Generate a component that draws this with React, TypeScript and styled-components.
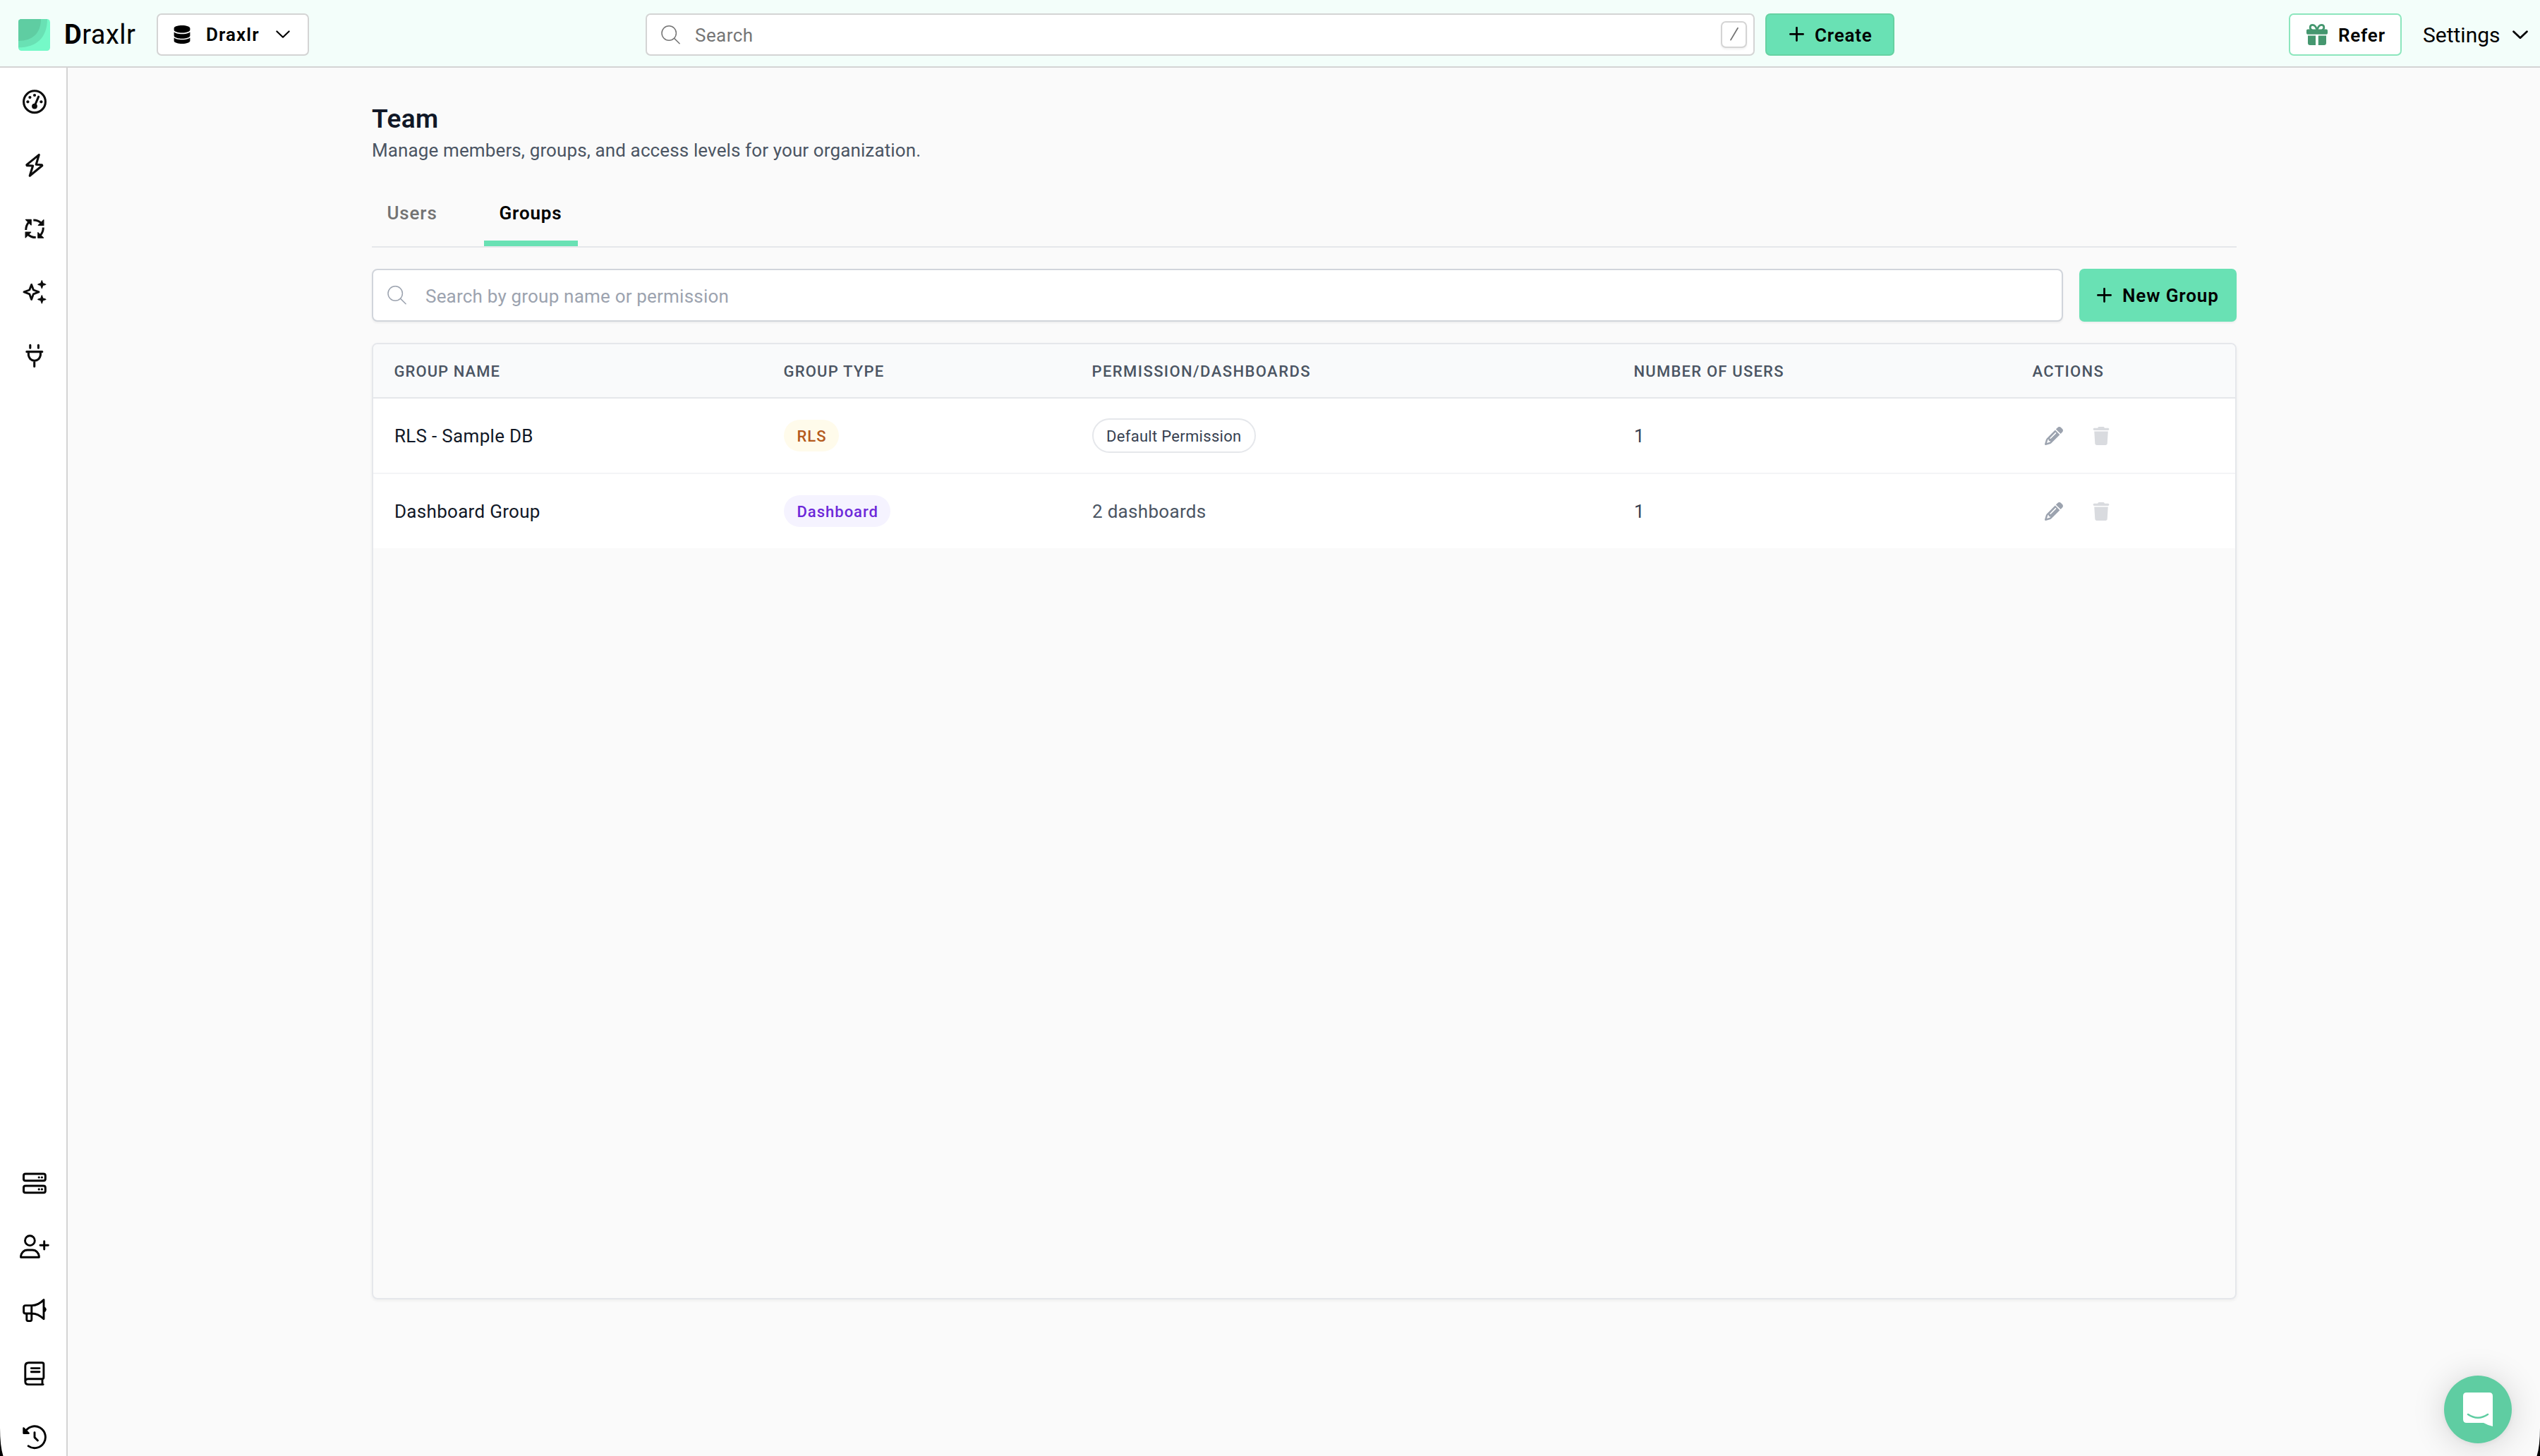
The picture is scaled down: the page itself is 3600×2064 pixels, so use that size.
import React from 'react';
import styled, { createGlobalStyle, css } from 'styled-components';
import { FaDatabase, FaPencil, FaTrash } from 'react-icons/fa6';

const GlobalStyle = createGlobalStyle`
  * { box-sizing: border-box; }
  html, body { margin: 0; padding: 0; }
  body {
    background: #fafafa;
    color: #000;
    font-family: Roboto, 'Liberation Sans', sans-serif;
    font-size: 26px;
    overflow: hidden;
  }
  button, input { font: inherit; color: inherit; margin: 0; }
  svg { display: block; flex: none; }
`;

/* ---------- shell ---------- */

const Shell = styled.div`
  display: grid;
  grid-template: 96px minmax(0, 1fr) / 96px minmax(0, 1fr);
  width: 100vw;
  height: 100vh;
  overflow: hidden;
`;

const Header = styled.header`
  grid-column: 1 / -1;
  display: grid;
  grid-template-columns: 1fr 1770px 1fr;
  align-items: center;
  padding-top: 4px;
  background: #f3fefa;
  border-bottom: 2px solid #d4d4d4;
`;

const HeaderStart = styled.div`
  display: flex;
  align-items: center;
  padding-left: 26px;
`;

const HeaderCenter = styled.div`
  display: flex;
  gap: 15px;
`;

const HeaderEnd = styled.div`
  display: flex;
  justify-content: flex-end;
  align-items: center;
  padding-right: 17px;
`;

const Brand = styled.div`
  width: 151px;
  padding-left: 20px;
  font-size: 38px;
  letter-spacing: 0.5px;
  white-space: nowrap;
  b { font-weight: 700; }
`;

const boxed = css`
  display: flex;
  align-items: center;
  height: 60px;
  border: 2px solid #d4d4d4;
  border-radius: 7px;
  background: #fff;
`;

const DatabaseSelect = styled.button`
  ${boxed}
  width: 216px;
  padding: 0 0 0 21px;
  font-weight: 600;
  letter-spacing: 1.1px;
`;

const SelectLabel = styled.span`
  width: 99px;
  margin-left: 21px;
  text-align: left;
`;

const GlobalSearch = styled.div`
  ${boxed}
  flex: 1;
  padding: 0 9px 0 20px;
  color: #757575;
  letter-spacing: 0.45px;
`;

const GlobalSearchLabel = styled.span`
  flex: 1;
  padding: 2px 0 0 21px;
`;

const Kbd = styled.span`
  display: flex;
  align-items: center;
  justify-content: center;
  width: 37px;
  height: 38px;
  border: 2px solid #d4d4d4;
  border-radius: 7px;
  background: #fff;
  box-shadow: 0 2px 3px rgba(0, 0, 0, 0.06);
`;

const CreateButton = styled.button`
  ${boxed}
  width: 183px;
  padding: 0 0 0 32px;
  gap: 15px;
  background: #69e1b4;
  border-color: #66d2a2;
  font-weight: 600;
  letter-spacing: 0.8px;
  span { padding-top: 2px; }
`;

const ReferButton = styled.button`
  ${boxed}
  width: 160px;
  padding: 0 0 0 23px;
  gap: 15px;
  border-color: #8ce6bd;
  font-weight: 600;
  letter-spacing: 0.8px;
  span { padding-top: 2px; }
`;

const SettingsMenu = styled.div`
  display: flex;
  align-items: center;
  width: 149px;
  margin-left: 30px;
  justify-content: space-between;
  font-size: 30px;
  span { padding-top: 1px; }
`;

const Sidebar = styled.nav`
  display: flex;
  flex-direction: column;
  justify-content: space-between;
  min-height: 0;
  padding-top: 3px;
  background: #fff;
  border-right: 2px solid #d4d4d4;
`;

const NavGroup = styled.div<{ $bottom?: boolean }>`
  display: flex;
  flex-direction: column;
  color: ${p => (p.$bottom ? '#000' : '#0d0d0d')};
  margin-bottom: ${p => (p.$bottom ? '-18px' : '0')};
`;

const NavItem = styled.a`
  display: flex;
  align-items: center;
  height: 90px;
  padding-left: 25px;
`;

/* ---------- page ---------- */

const Page = styled.main`
  display: flex;
  flex-direction: column;
  width: 2643px;
  height: 1746px;
  margin-left: 431px;
  padding-top: 48px;
`;

const Title = styled.h1`
  margin: 0;
  font-size: 37px;
  font-weight: 600;
  line-height: 49px;
  letter-spacing: 0.4px;
  color: #111827;
`;

const Subtitle = styled.p`
  margin: 2px 0 32px;
  line-height: 36px;
  letter-spacing: 0.12px;
  color: #4b5563;
`;

const Tabs = styled.div`
  display: flex;
  gap: 46px;
  border-bottom: 2px solid #e5e7eb;
`;

const Tab = styled.a<{ $active?: boolean }>`
  display: flex;
  align-items: center;
  width: ${p => (p.$active ? 133 : 113)}px;
  height: 86px;
  padding-left: 21.5px;
  border-bottom: 8px solid ${p => (p.$active ? '#69e1b4' : 'transparent')};
  color: ${p => (p.$active ? '#000' : '#737373')};
  font-weight: ${p => (p.$active ? 600 : 500)};
  letter-spacing: 0.85px;
`;

const Toolbar = styled.div`
  display: flex;
  gap: 23px;
  height: 75px;
  margin: 30px 0;
`;

const SearchField = styled.label`
  display: flex;
  flex: 1;
  align-items: center;
  padding-left: 20px;
  border: 2px solid #d1d5db;
  border-radius: 8px;
  background: #fff;
  color: #9ca3af;
  box-shadow: 0 2px 3px rgba(0, 0, 0, 0.05);
`;

const SearchInput = styled.input`
  flex: 1;
  height: 100%;
  margin-left: 27px;
  padding: 3px 0 0 0;
  border: 0;
  outline: 0;
  background: transparent;
  letter-spacing: 0.2px;
  &::placeholder { color: #9ca3af; opacity: 1; }
`;

const NewGroupButton = styled.button`
  display: flex;
  align-items: center;
  gap: 15px;
  width: 223px;
  padding: 0 0 0 25px;
  border: 0;
  border-radius: 7px;
  background: #69e1b4;
  font-weight: 600;
  letter-spacing: 0.9px;
  white-space: nowrap;
  box-shadow: 0 2px 3px rgba(0, 0, 0, 0.05);
  span { padding-top: 1px; }
`;

const Table = styled.div`
  flex: 1;
  border: 2px solid #e5e7eb;
  border-radius: 8px;
  box-shadow: 0 2px 4px rgba(0, 0, 0, 0.05);
  overflow: hidden;
`;

const columns = css`
  display: grid;
  grid-template-columns: 552px 437px 768px 565px 1fr;
  align-items: center;
`;

const HeadRow = styled.div`
  ${columns}
  height: 77px;
  background: #f9fafb;
  border-bottom: 2px solid #e5e7eb;
  color: #4b5563;
  font-size: 22px;
  font-weight: 500;
`;

const HeadCell = styled.div<{ $spacing: number }>`
  padding: 2px 0 0 29.5px;
  letter-spacing: ${p => p.$spacing}px;
  white-space: nowrap;
`;

const Row = styled.div`
  ${columns}
  height: 107px;
  background: #fff;
  border-bottom: 2px solid #f3f4f6;
  &:last-child {
    height: 105px;
    border-bottom: 0;
  }
`;

const Cell = styled.div<{ $tone: string }>`
  display: flex;
  align-items: center;
  gap: 7px;
  padding-left: 30px;
  color: ${p => p.$tone};
  letter-spacing: 0.3px;
`;

const Badge = styled.span<{ $bg: string; $fg: string }>`
  height: 45px;
  padding: 1px 17.5px 0 18.5px;
  border-radius: 23px;
  background: ${p => p.$bg};
  color: ${p => p.$fg};
  font-size: 22px;
  font-weight: 500;
  line-height: 45px;
  letter-spacing: 1px;
`;

const Pill = styled.span`
  height: 49px;
  padding: 1px 18px 0;
  border: 2px solid #e5e7eb;
  border-radius: 25px;
  color: #374151;
  font-size: 22px;
  line-height: 45px;
  letter-spacing: 0.3px;
`;

const IconButton = styled.button<{ $muted?: boolean }>`
  display: flex;
  align-items: center;
  justify-content: center;
  width: 60px;
  height: 60px;
  padding: 0;
  border: 0;
  background: none;
  color: ${p => (p.$muted ? '#d9dbdf' : '#9ca3af')};
`;

const ChatLauncher = styled.button`
  position: fixed;
  right: 40px;
  bottom: 18px;
  display: flex;
  align-items: center;
  justify-content: center;
  width: 96px;
  height: 96px;
  padding: 0;
  border: 0;
  border-radius: 50%;
  background: #5fcda2;
  box-shadow: 0 1.5px 9px rgba(0, 0, 0, 0.06), 0 3px 48px rgba(0, 0, 0, 0.16);
`;

const Corner = styled.svg<{ $side: 'left' | 'right' }>`
  position: fixed;
  bottom: 0;
  ${p => p.$side}: 0;
  transform: ${p => (p.$side === 'right' ? 'scaleX(-1)' : 'none')};
`;

/* ---------- icons ---------- */

const NavSvg = ({ children, w = 3 }: { children: React.ReactNode; w?: number }) => (
  <svg width="48" height="48" viewBox="0 0 48 48" fill="none" stroke="currentColor" strokeWidth={w} strokeLinecap="round" strokeLinejoin="round">
    {children}
  </svg>
);

const GaugeIcon = () => (
  <NavSvg w={3.1}>
    <circle cx="24" cy="24.2" r="15.4" />
    <path d="M29.6 17.2 25 28" />
    <g fill="currentColor" stroke="none">
      <circle cx="24" cy="30.6" r="3.9" />
      <circle cx="14.4" cy="24.3" r="2.1" />
      <circle cx="17.4" cy="18" r="2.1" />
      <circle cx="24" cy="15" r="2.1" />
      <circle cx="33.4" cy="24.3" r="2.1" />
    </g>
  </NavSvg>
);

const BoltIcon = () => (
  <NavSvg w={3.1}>
    <path d="M30.3 9.4 12.8 23.6 13.2 24.6 21.6 25 17.2 39.3 34.8 24.8 34.4 23.8 26.2 23.2Z" />
  </NavSvg>
);

const CycleIcon = () => (
  <NavSvg>
    {[0, 90, 180, 270].map(angle => (
      <g key={angle} transform={`rotate(${angle} 24 24.3)`}>
        <path d="M11.7 26C11.7 21 13.4 17.4 16.2 14.6" strokeLinecap="butt" />
        <path d="M11.4 11.4H19.2V19Z" fill="currentColor" strokeWidth="1.2" />
      </g>
    ))}
  </NavSvg>
);

const SparklesIcon = () => (
  <NavSvg w={2.9}>
    <path d="M19.6 13.4 22.4 21 30 23.9 22.4 26.8 19.6 34.4 16.8 26.8 9 23.9 16.8 21Z" />
    <g fill="currentColor" stroke="none">
      <path d="M34.3 6.9Q34.9 6.9 36.2 11.3 40.6 12.6 40.6 13.2 40.6 13.8 36.2 15.1 34.9 19.5 34.3 19.5 33.7 19.5 32.4 15.1 28 13.8 28 13.2 28 12.6 32.4 11.3 33.7 6.9 34.3 6.9Z" />
      <path d="M34.3 28.1Q34.9 28.1 36.2 32.5 40.6 33.8 40.6 34.4 40.6 35 36.2 36.3 34.9 40.7 34.3 40.7 33.7 40.7 32.4 36.3 28 35 28 34.4 28 33.8 32.4 32.5 33.7 28.1 34.3 28.1Z" />
    </g>
  </NavSvg>
);

const PlugIcon = () => (
  <NavSvg w={3.1}>
    <path d="M17.8 9.2V13.2M29.4 9.2V13.2M12.8 18.6H34.8M15.4 19V23.6A8.6 9 0 0 0 32.4 23.6V19M23.7 33V39.4" />
  </NavSvg>
);

const ServerIcon = () => (
  <NavSvg w={3}>
    <rect x="8.5" y="11" width="30.8" height="9.8" rx="2.6" />
    <rect x="8.5" y="28" width="30.8" height="9.8" rx="2.6" />
    <g fill="currentColor" stroke="none">
      <circle cx="30.2" cy="16" r="1.6" />
      <circle cx="34.4" cy="16" r="1.6" />
      <circle cx="30.2" cy="32.9" r="1.6" />
      <circle cx="34.4" cy="32.9" r="1.6" />
    </g>
  </NavSvg>
);

const UserPlusIcon = () => (
  <NavSvg w={2.9}>
    <circle cx="17.4" cy="15.7" r="6.9" />
    <path d="M4.5 39.3C4.5 33.3 8.4 29 14 29H20.8C26.4 29 30.4 33.3 30.4 39.3ZM37.7 16.6V28M32 22.3H43.3" />
  </NavSvg>
);

const MegaphoneIcon = () => (
  <NavSvg w={2.9}>
    <path d="M19.8 17.6H11.2Q8.6 17.6 8.6 20.2V26.4Q8.6 29 11.2 29H19.8ZM12.8 29V37.6Q12.8 39.6 14.8 39.6H17.8Q19.8 39.6 19.8 37.6V29M19.8 17.6C27 17.8 31.6 15 37 9.6V36.8C31.6 31.6 27 28.8 19.8 29" />
    <path d="M38 19.6Q40.8 20.6 40.8 23.3 40.8 26 38 27Z" fill="currentColor" stroke="none" />
  </NavSvg>
);

const BookIcon = () => (
  <NavSvg w={2.9}>
    <path d="M36.2 39.6H15.4Q10.8 39.6 10.8 35.4V13.8Q10.8 8.8 15.8 8.8H34.6Q36.9 8.8 36.9 11V29.6Q36.9 31.8 34.6 31.8H15.2Q10.8 31.8 10.8 35.6M35 32V39.4M19.3 16.6H31M19.3 21.7H31" />
  </NavSvg>
);

const HistoryIcon = () => (
  <NavSvg w={2.9}>
    <path d="M15.2 36.9A15.4 15.4 0 1 0 10.2 17.4M24 17.6V24.6L28.4 29" />
    <path d="M8.4 11.4V18.8H15.8Z" fill="currentColor" strokeWidth="2.2" />
  </NavSvg>
);

const SearchIcon = () => (
  <svg width="27" height="27" viewBox="0 0 27 27" fill="none" stroke="currentColor" strokeWidth="1.5" strokeLinecap="round">
    <circle cx="11.2" cy="11" r="10.2" />
    <path d="M18.6 18.4 26.1 25.7" />
  </svg>
);

const PlusIcon = () => (
  <svg width="21" height="22" viewBox="0 0 21 22" fill="none" stroke="currentColor" strokeWidth="2.7" strokeLinecap="round">
    <path d="M10.5 1.2V19.6M1.4 10.4H19.6" />
  </svg>
);

const ChevronIcon = ({ size, w }: { size: number; w: number }) => (
  <svg width={size} height={size * 0.56} viewBox="0 0 20 11" fill="none" stroke="currentColor" strokeWidth={w} strokeLinecap="round" strokeLinejoin="round">
    <path d="M1.4 1.4 10 9.6 18.6 1.4" />
  </svg>
);

const GiftIcon = () => (
  <svg width="30" height="30" viewBox="0 0 30 30" fill="#45976f">
    <rect x="0" y="7.4" width="30" height="7.4" rx="1.8" />
    <path d="M2 16.4H13V30H5Q2 30 2 27ZM16.8 16.4H28V27Q28 30 25 30H16.8Z" />
    <path d="M15 8.4C13.4 3.6 11.4 1.4 8.8 1.4 6.6 1.4 5.2 3 5.2 5 5.2 6.8 6.2 8 8 8.6M15 8.4C16.6 3.6 18.6 1.4 21.2 1.4 23.4 1.4 24.8 3 24.8 5 24.8 6.8 23.8 8 22 8.6" fill="none" stroke="#45976f" strokeWidth="2.8" />
  </svg>
);

const SlashIcon = () => (
  <svg width="12" height="20" viewBox="0 0 12 20" stroke="#737373" strokeWidth="1.8" strokeLinecap="round">
    <path d="M11 0.8 1 17.6" />
  </svg>
);

const Logo = () => (
  <svg width="45" height="45" viewBox="0 0 45 45">
    <clipPath id="logo-clip"><rect width="45" height="45" rx="4.5" /></clipPath>
    <g clipPath="url(#logo-clip)">
      <rect width="45" height="45" fill="#75f9c8" />
      <path d="M0 0H41C41 26 26 40.3 0 40.3Z" fill="#69e1b4" />
      <path d="M0 0H32C32 20 20 31 0 31Z" fill="#5fcda2" />
    </g>
  </svg>
);

const ChatIcon = () => (
  <svg width="42" height="48" viewBox="0 0 42 48">
    <path d="M5 0H37Q42 0 42 5V48Q35 46.4 29 43H5Q0 43 0 38V5Q0 0 5 0Z" fill="#fff" />
    <path d="M7 31Q21 40.4 35 31" fill="none" stroke="#5fcda2" strokeWidth="2.6" strokeLinecap="round" />
  </svg>
);

/* ---------- data ---------- */

const headings = [
  { label: 'GROUP NAME', spacing: 1.05 },
  { label: 'GROUP TYPE', spacing: 1.2 },
  { label: 'PERMISSION/DASHBOARDS', spacing: 1.42 },
  { label: 'NUMBER OF USERS', spacing: 1.22 },
  { label: 'ACTIONS', spacing: 1.35 },
];

const groups = [
  { name: 'RLS - Sample DB', type: 'RLS', bg: '#fffbeb', fg: '#b45a1c', access: <Pill>Default Permission</Pill>, users: 1 },
  { name: 'Dashboard Group', type: 'Dashboard', bg: '#f5f3ff', fg: '#6d28d9', access: '2 dashboards', users: 1 },
];

const topNav = [GaugeIcon, BoltIcon, CycleIcon, SparklesIcon, PlugIcon];
const bottomNav = [ServerIcon, UserPlusIcon, MegaphoneIcon, BookIcon, HistoryIcon];

export default function App() {
  return (
    <>
      <GlobalStyle />
      <Shell>
        <Header>
          <HeaderStart>
            <Logo />
            <Brand><b>D</b>raxlr</Brand>
            <DatabaseSelect>
              <FaDatabase size={26} />
              <SelectLabel>Draxlr</SelectLabel>
              <ChevronIcon size={20} w={2.2} />
            </DatabaseSelect>
          </HeaderStart>
          <HeaderCenter>
            <GlobalSearch>
              <SearchIcon />
              <GlobalSearchLabel>Search</GlobalSearchLabel>
              <Kbd><SlashIcon /></Kbd>
            </GlobalSearch>
            <CreateButton><PlusIcon /><span>Create</span></CreateButton>
          </HeaderCenter>
          <HeaderEnd>
            <ReferButton><GiftIcon /><span>Refer</span></ReferButton>
            <SettingsMenu><span>Settings</span><ChevronIcon size={22} w={2.5} /></SettingsMenu>
          </HeaderEnd>
        </Header>
        <Sidebar>
          <NavGroup>{topNav.map((Icon, i) => <NavItem key={i}><Icon /></NavItem>)}</NavGroup>
          <NavGroup $bottom>{bottomNav.map((Icon, i) => <NavItem key={i}><Icon /></NavItem>)}</NavGroup>
        </Sidebar>
        <Page>
          <Title>Team</Title>
          <Subtitle>Manage members, groups, and access levels for your organization.</Subtitle>
          <Tabs>
            <Tab>Users</Tab>
            <Tab $active>Groups</Tab>
          </Tabs>
          <Toolbar>
            <SearchField>
              <SearchIcon />
              <SearchInput placeholder="Search by group name or permission" />
            </SearchField>
            <NewGroupButton><PlusIcon /><span>New Group</span></NewGroupButton>
          </Toolbar>
          <Table>
            <HeadRow>
              {headings.map(h => <HeadCell key={h.label} $spacing={h.spacing}>{h.label}</HeadCell>)}
            </HeadRow>
            {groups.map(g => (
              <Row key={g.name}>
                <Cell $tone="#111827">{g.name}</Cell>
                <Cell $tone="#111827"><Badge $bg={g.bg} $fg={g.fg}>{g.type}</Badge></Cell>
                <Cell $tone="#4b5563">{g.access}</Cell>
                <Cell $tone="#374151">{g.users}</Cell>
                <Cell $tone="#9ca3af">
                  <IconButton><FaPencil size={26} /></IconButton>
                  <IconButton $muted><FaTrash size={26} /></IconButton>
                </Cell>
              </Row>
            ))}
          </Table>
        </Page>
      </Shell>
      <ChatLauncher><ChatIcon /></ChatLauncher>
      <Corner $side="left" width="5" height="40" viewBox="0 0 5 40"><path d="M0 0Q0 26 4.5 40H0Z" /></Corner>
      <Corner $side="right" width="5" height="40" viewBox="0 0 5 40"><path d="M0 0Q0 26 4.5 40H0Z" /></Corner>
    </>
  );
}
